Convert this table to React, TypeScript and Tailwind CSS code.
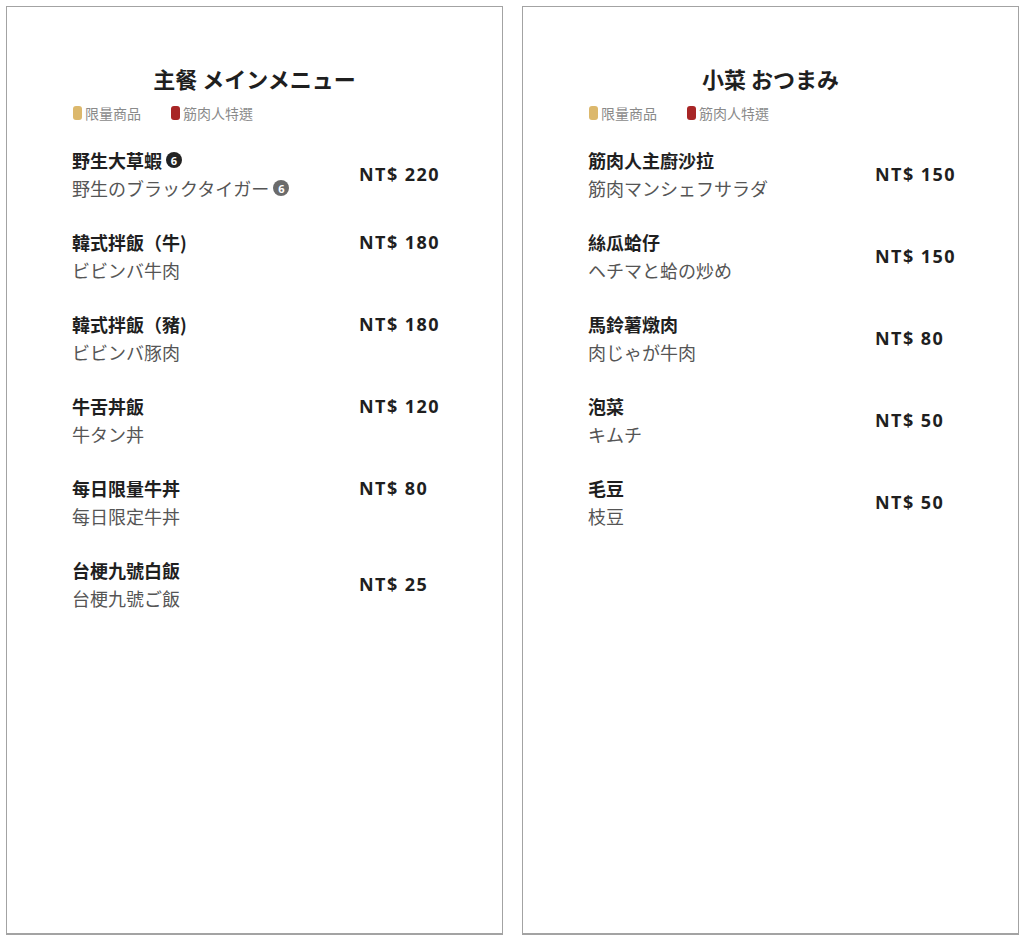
// Two-page menu board: main dishes and small plates.

type Item = {
  name: string;
  sub: string;
  price: string;
  badge?: boolean;
  align: 'top' | 'center';
};

const MAIN: Item[] = [
  { name: '野生大草蝦', sub: '野生のブラックタイガー', price: 'NT$ 220', badge: true, align: 'center' },
  { name: '韓式拌飯（牛)', sub: 'ビビンバ牛肉', price: 'NT$ 180', align: 'top' },
  { name: '韓式拌飯（豬)', sub: 'ビビンバ豚肉', price: 'NT$ 180', align: 'top' },
  { name: '牛舌丼飯', sub: '牛タン丼', price: 'NT$ 120', align: 'top' },
  { name: '每日限量牛丼', sub: '每日限定牛丼', price: 'NT$ 80', align: 'top' },
  { name: '台梗九號白飯', sub: '台梗九號ご飯', price: 'NT$ 25', align: 'center' },
];

const SIDES: Item[] = [
  { name: '筋肉人主廚沙拉', sub: '筋肉マンシェフサラダ', price: 'NT$ 150', align: 'center' },
  { name: '絲瓜蛤仔', sub: 'ヘチマと蛤の炒め', price: 'NT$ 150', align: 'center' },
  { name: '馬鈴薯燉肉', sub: '肉じゃが牛肉', price: 'NT$ 80', align: 'center' },
  { name: '泡菜', sub: 'キムチ', price: 'NT$ 50', align: 'center' },
  { name: '毛豆', sub: '枝豆', price: 'NT$ 50', align: 'center' },
];

const CJK = { fontFamily: '"Noto Sans CJK TC", "Noto Sans CJK JP", sans-serif' };
const PRICE = { fontFamily: '"Open Sans", "Noto Sans", sans-serif' };

function Badge({ dark }: { dark?: boolean }) {
  return (
    <span
      className={`ml-1 inline-flex h-4 w-4 items-center justify-center rounded-full text-[11px] font-bold leading-none text-white ${
        dark ? 'bg-[#222]' : 'bg-[#6b6b6b]'
      }`}
      style={PRICE}
    >
      6
    </span>
  );
}

function Legend() {
  return (
    <div className="mt-[9px] flex h-5 items-center gap-[30px] pl-[66px] text-[14px] text-[#8a8a8a]">
      <span className="flex items-center">
        <span className="mr-[3px] inline-block h-[14px] w-[9px] rounded-[3px] bg-[#dcb86c]" />
        限量商品
      </span>
      <span className="flex items-center">
        <span className="mr-[3px] inline-block h-[14px] w-[9px] rounded-[3px] bg-[#a82626]" />
        筋肉人特選
      </span>
    </div>
  );
}

function MenuRow({ item }: { item: Item }) {
  return (
    <div className={`flex ${item.align === 'center' ? 'items-center' : 'items-start'}`}>
      <div className="w-[287px] shrink-0">
        <div className="flex h-7 items-center text-[18px] font-bold text-[#1f1f1f]">
          {item.name}
          {item.badge && <Badge dark />}
        </div>
        <div className="flex h-7 items-center text-[18px] text-[#555]">
          {item.sub}
          {item.badge && <Badge />}
        </div>
      </div>
      <div
        className="flex h-7 items-center text-[18px] font-bold tracking-[0.08em] text-[#1f1f1f]"
        style={PRICE}
      >
        {item.price}
      </div>
    </div>
  );
}

function Panel({ title, items }: { title: string; items: Item[] }) {
  return (
    <section className="h-[929px] w-[497px] border border-b-2 border-[#a3a3a3] bg-white pt-[55px]">
      <h2 className="h-8 text-center text-[22px] font-bold leading-8 text-[#1f1f1f]">{title}</h2>
      <Legend />
      <div className="mt-[23px] flex flex-col gap-[26px] pl-[65px]">
        {items.map((it) => (
          <MenuRow key={it.name} item={it} />
        ))}
      </div>
    </section>
  );
}

export default function App() {
  return (
    <div className="flex h-[938px] w-[1024px] gap-[19px] bg-white pl-[6px] pt-[6px]" style={CJK}>
      <Panel title="主餐 メインメニュー" items={MAIN} />
      <Panel title="小菜 おつまみ" items={SIDES} />
    </div>
  );
}
